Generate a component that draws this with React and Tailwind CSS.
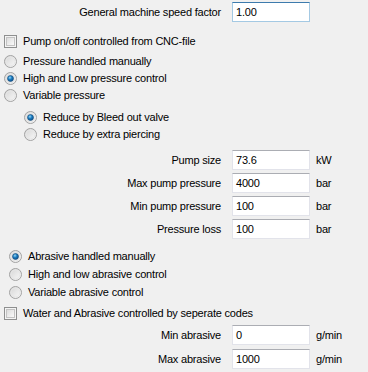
import { useState } from "react";

function Radio({ checked }) {
  return (
    <svg width="13" height="13" viewBox="0 0 13 13" className="shrink-0">
      <defs>
        <linearGradient id="rface" x1="0" y1="0" x2="1" y2="1">
          <stop offset="0" stopColor="#d4d4d4" />
          <stop offset="1" stopColor="#fbfbfb" />
        </linearGradient>
        <radialGradient id="rdot" cx="0.4" cy="0.35" r="0.7">
          <stop offset="0" stopColor="#9ad8f5" />
          <stop offset="0.45" stopColor="#1c7ec2" />
          <stop offset="1" stopColor="#0b4a86" />
        </radialGradient>
      </defs>
      <circle cx="6.5" cy="6.5" r="6" fill="url(#rface)" stroke="#a2a2a2" strokeWidth="1" />
      <circle cx="6.5" cy="6.5" r="4.5" fill="none" stroke="#e6e6e6" strokeWidth="1" />
      {checked && <circle cx="6.5" cy="6.5" r="3" fill="url(#rdot)" stroke="#1a4f7c" strokeWidth="0.6" />}
    </svg>
  );
}

function Check() {
  return (
    <div className="w-[13px] h-[13px] shrink-0 border border-[#8e8f8f] bg-[#f4f4f4] p-[1px]">
      <div className="w-full h-full border border-[#c3c3c3] bg-gradient-to-br from-[#dcdcdc] to-[#fafafa]" />
    </div>
  );
}

function Field({ label, value, unit, focus, className = "" }) {
  return (
    <div className={`flex items-center h-[20px] ${className}`}>
      <span className="w-[222px] text-right pr-[1px]">{label}</span>
      <div
        className={`ml-[10px] w-[78px] h-[20px] bg-white border flex items-center pl-[3px] ${
          focus
            ? "border-[#a4c9e3] border-t-[#3d7bad]"
            : "border-[#e2e3ea] border-t-[#abadb3]"
        }`}
      >
        {value}
      </div>
      {unit && <span className="ml-[6px]">{unit}</span>}
    </div>
  );
}

function RadioRow({ label, checked, indent = 4, h = "h-[17px]" }) {
  return (
    <div className={`flex items-center ${h}`} style={{ paddingLeft: indent }}>
      <Radio checked={checked} />
      <span className="ml-[6px]">{label}</span>
    </div>
  );
}

export default function App() {
  const [speed] = useState("1.00");

  return (
    <div
      className="w-[368px] h-[372px] bg-[#f0f0f0] text-black text-[11px] tracking-[-0.2px] overflow-hidden"
      style={{ fontFamily: '"Liberation Sans", Arial, sans-serif' }}
    >
      <Field label="General machine speed factor" value={speed} focus className="mt-[2px]" />

      {/* Pump */}
      <div className="flex items-center h-[17px] mt-[11px] pl-[4px]">
        <Check />
        <span className="ml-[6px]">Pump on/off controlled from CNC-file</span>
      </div>

      <div className="mt-[3px]">
        <RadioRow label="Pressure handled manually" />
        <RadioRow label="High and Low pressure control" checked />
        <RadioRow label="Variable pressure" />
      </div>

      <div className="mt-[5px]">
        <RadioRow label="Reduce by Bleed out valve" checked indent={24} />
        <RadioRow label="Reduce by extra piercing" indent={24} />
      </div>

      <div className="mt-[7px] flex flex-col gap-[3px]">
        <Field label="Pump size" value="73.6" unit="kW" />
        <Field label="Max pump pressure" value="4000" unit="bar" />
        <Field label="Min pump pressure" value="100" unit="bar" />
        <Field label="Pressure loss" value="100" unit="bar" />
      </div>

      {/* Abrasive */}
      <div className="mt-[8px]">
        <RadioRow label="Abrasive handled manually" checked indent={9} h="h-[18px]" />
        <RadioRow label="High and low abrasive control" indent={9} h="h-[18px]" />
        <RadioRow label="Variable abrasive control" indent={9} h="h-[18px]" />
      </div>

      <div className="flex items-center h-[17px] mt-[4px] pl-[4px]">
        <Check />
        <span className="ml-[6px]">Water and Abrasive controlled by seperate codes</span>
      </div>

      <div className="mt-[3px] flex flex-col gap-[4px]">
        <Field label="Min abrasive" value="0" unit="g/min" />
        <Field label="Max abrasive" value="1000" unit="g/min" />
      </div>
    </div>
  );
}
